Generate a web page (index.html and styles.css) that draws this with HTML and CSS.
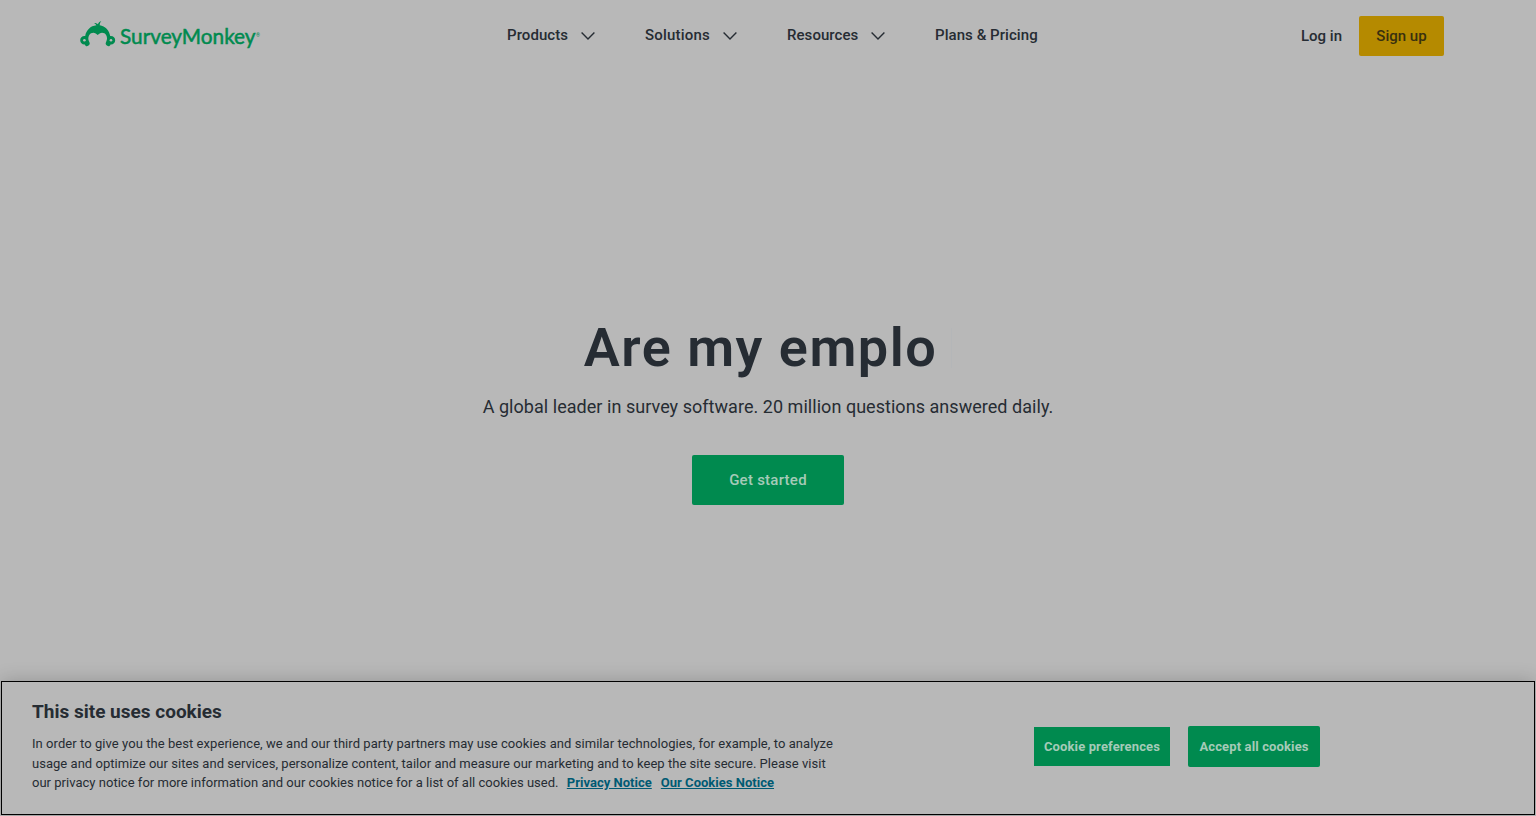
FILE: index.html
```html
<!DOCTYPE html>
<html lang="en">
<head>
    <meta charset="UTF-8">
    <meta name="viewport" content="width=device-width, initial-scale=1.0">
    <title>SurveyMonkey</title>
    <link rel="stylesheet" href="styles.css">
</head>
<body>

    <header class="header">
        <a class="logo" href="#">
            <svg width="184" height="34" viewBox="0 0 184 34">
                <path class="logo-mark" d="M16.4 5.3C16 4.3 15.2 3.4 14 2.9C16 2.8 17.2 3.4 17.9 4.3C18.4 2.6 19.6 1.5 21.3 1.2C20.2 2.3 19.7 3.6 19.7 5.3C25.2 6.2 29.2 10.4 30.2 16C33.2 15.7 35.2 17.6 35.2 20.2C35.2 22.9 33 24.7 30.5 24.4C30.2 26 28.6 26.6 27.3 25.8C25.6 24.8 25.2 23.4 26.2 21.7C27.7 19 27.2 15.2 24.4 13.3C22 11.9 19.4 12.8 17.7 15C16 12.8 13.4 11.9 11 13.3C8.2 15.2 7.7 19 9.2 21.7C10.2 23.4 9.8 24.8 8.1 25.8C6.8 26.6 5.2 26 4.9 24.4C2.4 24.7 .2 22.9 .2 20.2C.2 17.6 2.2 15.7 5.2 16C6.2 10.2 10.5 5.9 16.4 5.3Z"/>
                <circle class="logo-ear" cx="4.4" cy="20.2" r="1.3"/>
                <circle class="logo-ear" cx="31" cy="20.2" r="1.3"/>
                <text class="logo-text" x="40" y="23.6" textLength="135.5" lengthAdjust="spacingAndGlyphs">SurveyMonkey</text>
                <text class="logo-reg" x="176" y="16.5">®</text>
            </svg>
        </a>
        <nav class="nav">
            <a class="nav-link products" href="#">Products <svg class="chevron" width="14" height="8" viewBox="0 0 14 8"><path d="M.6 .6L7 7L13.4 .6"/></svg></a>
            <a class="nav-link solutions" href="#">Solutions <svg class="chevron" width="14" height="8" viewBox="0 0 14 8"><path d="M.6 .6L7 7L13.4 .6"/></svg></a>
            <a class="nav-link resources" href="#">Resources <svg class="chevron" width="14" height="8" viewBox="0 0 14 8"><path d="M.6 .6L7 7L13.4 .6"/></svg></a>
            <a class="nav-link pricing" href="#">Plans &amp; Pricing</a>
        </nav>
        <div class="account">
            <a class="login" href="#">Log in</a>
            <a class="signup" href="#">Sign up</a>
        </div>
    </header>

    <main class="hero">
        <h1 class="hero-title">Are my emplo<span class="cursor"></span></h1>
        <p class="hero-text">A global leader in survey software. 20 million questions answered daily.</p>
        <a class="get-started" href="#">Get started</a>
    </main>

    <section class="cookies">
        <div class="cookies-copy">
            <h2 class="cookies-title">This site uses cookies</h2>
            <p class="cookies-text">
                <span class="line line-1">In order to give you the best experience, we and our third party partners may use cookies and similar technologies, for example, to analyze</span>
                <span class="line line-2">usage and optimize our sites and services, personalize content, tailor and measure our marketing and to keep the site secure. Please visit</span>
                <span class="line line-3">our privacy notice for more information and our cookies notice for a list of all cookies used. <a class="notice privacy" href="#">Privacy Notice</a><a class="notice" href="#">Our Cookies Notice</a></span>
            </p>
        </div>
        <div class="cookies-actions">
            <button class="preferences">Cookie preferences</button>
            <button class="accept">Accept all cookies</button>
        </div>
    </section>

</body>
</html>
```

FILE: styles.css
```css
* {
    box-sizing: border-box;
}
body {
    margin: 0;
    height: 816px;
    overflow: hidden;
    display: flex;
    flex-direction: column;
    background-color: #b8b8b8;
    color: #262c33;
    font-family: Roboto, "Noto Sans", sans-serif;
}
a {
    color: inherit;
    text-decoration: none;
}
.header {
    height: 72px;
    padding: 0 92px 0 80px;
    display: grid;
    grid-template-columns: 427px 1fr auto;
    align-items: center;
    font-size: 15px;
    font-weight: 500;
}
.logo {
    height: 32px;
}
.logo svg {
    display: block;
}
.logo-mark, .logo-text, .logo-reg {
    fill: #008a4f;
}
.logo-ear {
    fill: #b8b8b8;
}
.logo-text {
    font-family: Lato, sans-serif;
    font-size: 20.5px;
    font-weight: 400;
    stroke: #008a4f;
    stroke-width: 0.5px;
}
.logo-reg {
    font-size: 5px;
}
.nav {
    display: flex;
    gap: 50px;
    line-height: 20px;
    padding-bottom: 2px;
    letter-spacing: 0.06px;
}
.nav-link {
    display: flex;
    align-items: center;
    justify-content: space-between;
    white-space: nowrap;
}
.products {
    width: 88px;
}
.solutions {
    width: 92px;
    letter-spacing: 0.2px;
}
.resources {
    width: 98px;
}
.chevron {
    fill: none;
    stroke: #262c33;
    stroke-width: 1.4;
    margin-top: 1px;
}
.account {
    display: flex;
    align-items: center;
    gap: 17px;
}
.signup {
    width: 85px;
    height: 40px;
    line-height: 40px;
    text-align: center;
    border-radius: 2px;
    background-color: #b58a00;
    color: #39300f;
}
.hero {
    flex: 1;
    padding-top: 241px;
    display: flex;
    flex-direction: column;
    align-items: center;
}
.hero-title {
    margin: 0;
    font-size: 54px;
    line-height: 70px;
    font-weight: 600;
    letter-spacing: 1.5px;
    display: flex;
    align-items: center;
}
.cursor {
    width: 1px;
    height: 40px;
    margin-left: 14px;
    background-color: #b4b6b8;
}
.hero-text {
    margin: 12px 0 0;
    font-size: 18px;
    line-height: 24px;
    letter-spacing: 0.04px;
}
.get-started {
    margin-top: 36px;
    width: 152px;
    height: 50px;
    line-height: 50px;
    text-align: center;
    border-radius: 2px;
    background-color: #008a4f;
    color: #a5cab8;
    font-size: 15px;
    font-weight: 500;
    letter-spacing: 0.25px;
}
.cookies {
    height: 134px;
    margin: 0 1px 1px;
    padding: 18px 30px 0;
    border: 1px solid #000;
    box-shadow: 0 0 18px rgba(0, 0, 0, 0.2);
    background-color: #b8b8b8;
    display: flex;
}
.cookies-copy {
    width: 1002px;
}
.cookies-title {
    margin: 0 0 10px;
    font-size: 19px;
    line-height: 24px;
    font-weight: 700;
}
.cookies-text {
    margin: 0;
    font-size: 13px;
    line-height: 19.5px;
}
.line {
    display: block;
    white-space: nowrap;
}
.line-1 {
    letter-spacing: 0.06px;
}
.line-2 {
    letter-spacing: 0.03px;
}
.line-3 {
    letter-spacing: 0.02px;
}
.notice {
    color: #005a73;
    font-weight: 700;
    text-decoration: underline;
}
.privacy {
    margin: 0 9px 0 5px;
}
.cookies-actions {
    padding-top: 26px;
    display: flex;
    align-items: center;
    align-self: flex-start;
    gap: 18px;
}
.preferences, .accept {
    padding: 0;
    border: none;
    background-color: #008a4f;
    color: #a5cab8;
    font-family: inherit;
    font-size: 13px;
    font-weight: 700;
    letter-spacing: 0.13px;
    cursor: pointer;
}
.preferences {
    width: 136px;
    height: 39px;
}
.accept {
    width: 132px;
    height: 41px;
    border-radius: 2px;
}
```
